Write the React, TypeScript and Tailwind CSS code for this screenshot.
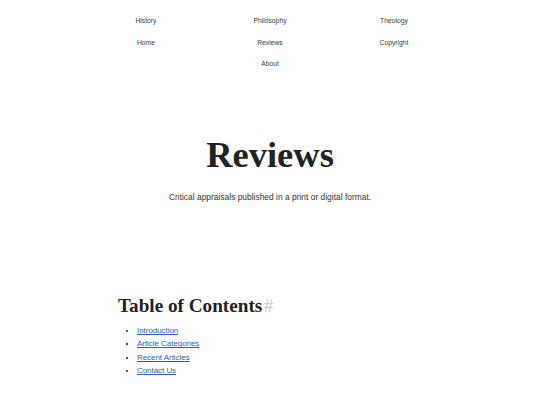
import React from "react";

const nav = ["History", "Philosophy", "Theology", "Home", "Reviews", "Copyright"];
const toc = ["Introduction", "Article Categories", "Recent Articles", "Contact Us"];

export default function App() {
  return (
    <div className="min-h-[405px] w-[540px] bg-white text-[#222]" style={{ fontFamily: '"Liberation Sans", Arial, sans-serif' }}>
      <nav className="mx-auto w-[372px] pt-[10px]">
        <div className="grid grid-cols-3">
          {nav.map((n) => (
            <a key={n} className="block h-[21.5px] text-center text-[6.75px] leading-[21.5px] text-[#3a3a3a]">
              {n}
            </a>
          ))}
          <span />
          <a className="block h-[21.5px] text-center text-[6.75px] leading-[21.5px] text-[#3a3a3a]">About</a>
          <span />
        </div>
      </nav>
      <h1
        className="mt-[62px] text-center text-[36.5px] font-bold leading-[36px] text-[#222]"
        style={{ fontFamily: '"Liberation Serif", "Times New Roman", serif' }}
      >
        Reviews
      </h1>
      <p className="mt-[18px] text-center text-[8.44px] leading-[12px] text-[#333]">
        Critical appraisals published in a print or digital format.
      </p>
      <div className="mx-auto w-[304px]">
        <h2
          className="mt-[93px] text-[19.2px] font-bold leading-[19.5px] text-[#222]"
          style={{ fontFamily: '"Liberation Serif", "Times New Roman", serif' }}
        >
          Table of Contents<span className="ml-[1.5px] font-normal text-[#ccc]">#</span>
        </h2>
        <ul className="mt-[9px] list-disc pl-[19px] text-[7.9px] leading-[13.45px]">
          {toc.map((t) => (
            <li key={t}>
              <a className="text-[#2060c8] underline">{t}</a>
            </li>
          ))}
        </ul>
      </div>
    </div>
  );
}
